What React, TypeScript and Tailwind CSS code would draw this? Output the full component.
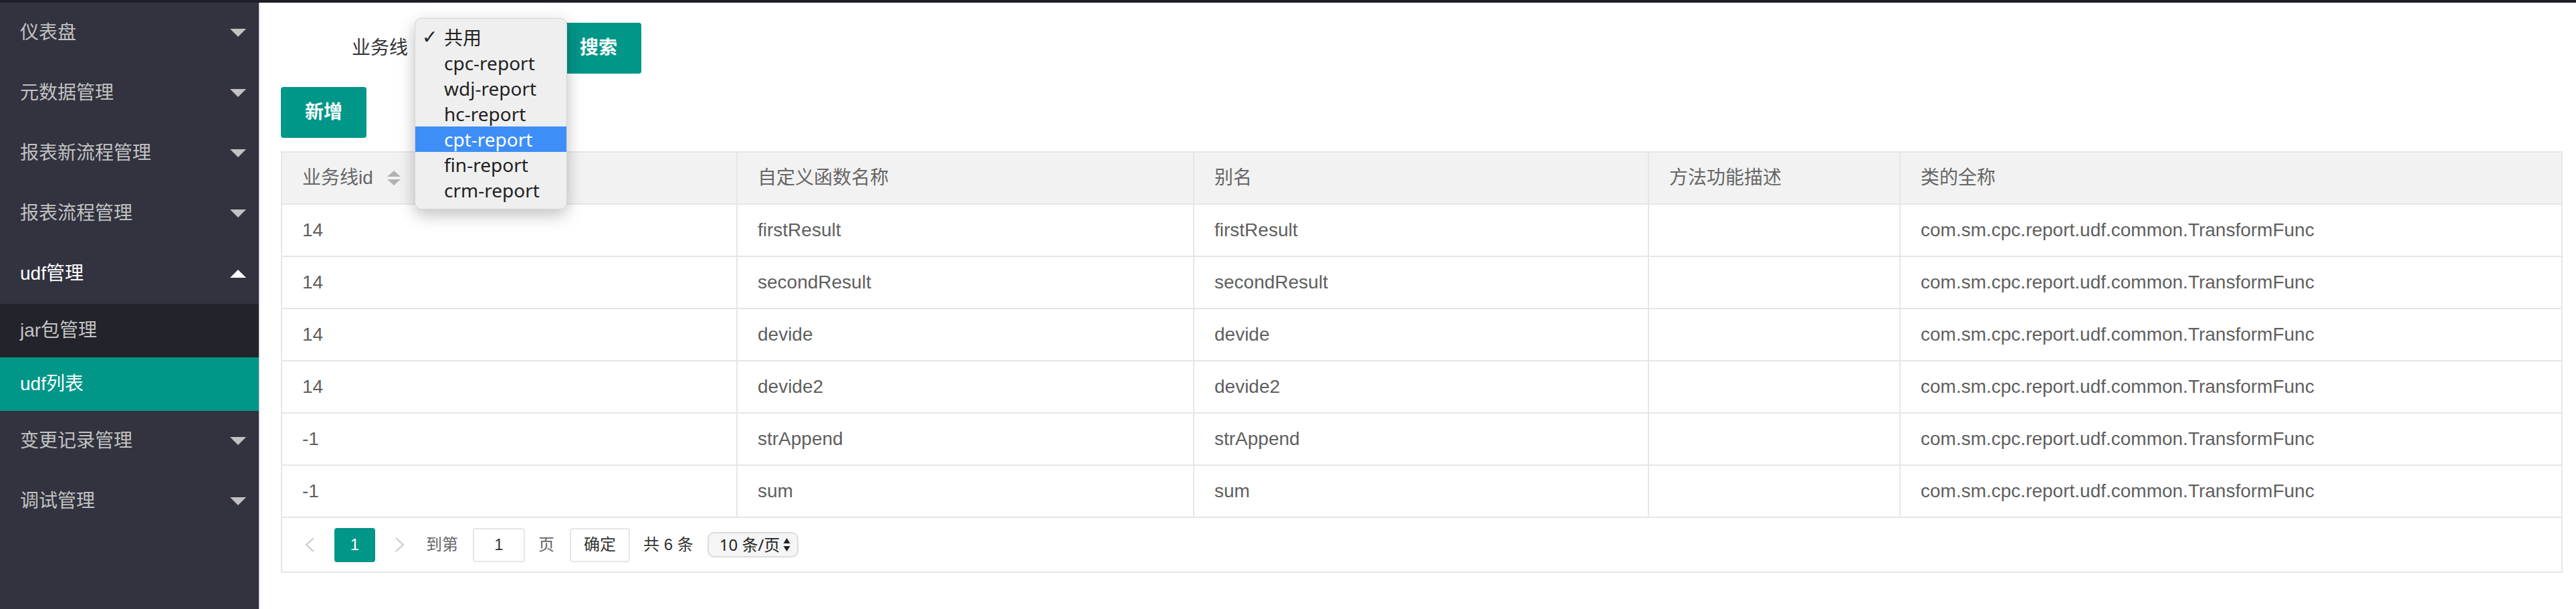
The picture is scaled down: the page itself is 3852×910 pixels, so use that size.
import React from "react";

const FONT = '"Liberation Sans", "Noto Sans CJK SC", sans-serif';
const MAC = '"Noto Sans", "Noto Sans CJK SC", sans-serif';

function Caret({ up, color }: { up?: boolean; color: string }) {
  return (
    <svg width="24" height="12" viewBox="0 0 24 12">
      <polygon points={up ? "0,12 24,12 12,0" : "0,0 24,0 12,12"} fill={color} />
    </svg>
  );
}

function MenuItem({ label, open }: { label: string; open?: boolean }) {
  return (
    <div className="h-[90px] flex items-center justify-between pl-[30px] pr-[19px]">
      <span className={open ? "text-[28px] text-white" : "text-[28px] text-[#c2c2c2]"}>{label}</span>
      <Caret up={open} color={open ? "#ffffff" : "#c2c2c2"} />
    </div>
  );
}

const rows: string[][] = [
  ["14", "firstResult", "firstResult", "", "com.sm.cpc.report.udf.common.TransformFunc"],
  ["14", "secondResult", "secondResult", "", "com.sm.cpc.report.udf.common.TransformFunc"],
  ["14", "devide", "devide", "", "com.sm.cpc.report.udf.common.TransformFunc"],
  ["14", "devide2", "devide2", "", "com.sm.cpc.report.udf.common.TransformFunc"],
  ["-1", "strAppend", "strAppend", "", "com.sm.cpc.report.udf.common.TransformFunc"],
  ["-1", "sum", "sum", "", "com.sm.cpc.report.udf.common.TransformFunc"],
];

const headers = ["业务线id", "自定义函数名称", "别名", "方法功能描述", "类的全称"];

const options = ["共用", "cpc-report", "wdj-report", "hc-report", "cpt-report", "fin-report", "crm-report"];

export default function App() {
  return (
    <div className="relative w-[3852px] h-[910px] bg-white flex flex-col overflow-hidden" style={{ fontFamily: FONT }}>
      <div className="h-[4px] bg-[#1e1f26] shrink-0" />
      <div className="flex flex-1">
        {/* Sidebar */}
        <div className="w-[389px] shrink-0 bg-[#32333f] border-r-2 border-[#e4e4e4] flex flex-col">
          <MenuItem label="仪表盘" />
          <MenuItem label="元数据管理" />
          <MenuItem label="报表新流程管理" />
          <MenuItem label="报表流程管理" />
          <MenuItem label="udf管理" open />
          <div className="bg-[#22232b]">
            <div className="h-[80px] flex items-center pl-[30px] text-[28px] text-[#c2c2c2]">jar包管理</div>
          </div>
          <div className="h-[80px] flex items-center pl-[30px] text-[28px] text-white bg-[#009688]">udf列表</div>
          <MenuItem label="变更记录管理" />
          <MenuItem label="调试管理" />
        </div>

        {/* Main */}
        <div className="flex-1 pl-[31px] pr-[20px] flex flex-col">
          <div className="mt-[30px] h-[76px] flex items-center">
            <div className="w-[220px] pr-[30px] text-right text-[28px] text-[#333]">业务线</div>
            <div className="w-[191px] h-[76px]" />
            <button className="w-[128px] h-[76px] bg-[#009688] rounded-[4px] text-white text-[28px] font-bold flex items-center justify-center">
              搜索
            </button>
          </div>

          <div className="mt-[20px]">
            <button className="w-[128px] h-[76px] bg-[#009688] rounded-[4px] text-white text-[28px] font-bold flex items-center justify-center">
              新增
            </button>
          </div>

          <div className="mt-[20px] border-2 border-[#e6e6e6]">
            <div className="grid grid-cols-[681px_683px_680px_376px_1fr]">
              {headers.map((h, i) => (
                <div
                  key={h}
                  className={
                    "h-[78px] bg-[#f2f2f2] border-b-2 border-[#e6e6e6] px-[30px] flex items-center text-[28px] text-[#666] " +
                    (i < 4 ? "border-r-2" : "")
                  }
                >
                  <span>{h}</span>
                  {i === 0 && (
                    <svg className="ml-[21px]" width="20" height="22" viewBox="0 0 20 22">
                      <polygon points="10,0 20,9 0,9" fill="#b2b2b2" />
                      <polygon points="0,13 20,13 10,22" fill="#b2b2b2" />
                    </svg>
                  )}
                </div>
              ))}
              {rows.map((r, ri) =>
                r.map((c, ci) => (
                  <div
                    key={ri + "-" + ci}
                    className={
                      "h-[78px] border-b-2 border-[#e6e6e6] px-[30px] flex items-center text-[28px] text-[#5f5f5f] whitespace-nowrap " +
                      (ci < 4 ? "border-r-2" : "")
                    }
                  >
                    {c}
                  </div>
                ))
              )}
            </div>
            {/* Pagination */}
            <div className="h-[80px] flex items-center pl-[33px] text-[24px]">
              <svg width="17" height="22" viewBox="0 0 17 22">
                <polyline points="14,1 3,11 14,21" fill="none" stroke="#c9c9c9" strokeWidth="2" />
              </svg>
              <div className="ml-[28px] w-[61px] h-[51px] bg-[#009688] rounded-[4px] text-white flex items-center justify-center">1</div>
              <svg className="ml-[28px]" width="17" height="22" viewBox="0 0 17 22">
                <polyline points="3,1 14,11 3,21" fill="none" stroke="#c9c9c9" strokeWidth="2" />
              </svg>
              <span className="ml-[31px] text-[#666]">到第</span>
              <div className="ml-[22px] w-[78px] h-[51px] border-2 border-[#e6e6e6] rounded-[4px] flex items-center justify-center text-[#333]">1</div>
              <span className="ml-[20px] text-[#666]">页</span>
              <div className="ml-[23px] w-[90px] h-[51px] border-2 border-[#e6e6e6] rounded-[4px] flex items-center justify-center text-[#333]">确定</div>
              <span className="ml-[20px] text-[#333]">共 6 条</span>
              <div
                className="ml-[21px] w-[136px] h-[38px] rounded-[10px] border-2 border-[#dcdcdc] bg-[#f5f5f5] flex items-center pl-[16px] pr-[10px] justify-between text-[#222] text-[24px]"
                style={{ fontFamily: MAC }}
              >
                <span>10 条/页</span>
                <svg width="11" height="22" viewBox="0 0 11 22">
                  <polygon points="5.5,1 10.5,9 0.5,9" fill="#222" />
                  <polygon points="0.5,13 10.5,13 5.5,21" fill="#222" />
                </svg>
              </div>
            </div>
          </div>
        </div>
      </div>

      {/* Native select popup */}
      <div
        className="absolute left-[620px] top-[27px] w-[228px] py-[9px] rounded-[10px] bg-[#efefef] border border-[#d4d4d4] shadow-[0_8px_24px_rgba(0,0,0,0.25)]"
        style={{ fontFamily: MAC }}
      >
        {options.map((o, i) => (
          <div
            key={o}
            className={
              "relative h-[38px] flex items-center pl-[43px] text-[28px] leading-none " +
              (i === 4 ? "bg-[#3d8ef7] text-white" : "text-[#222]")
            }
          >
            {i === 0 && (
              <span className="absolute left-[10px] text-[28px] font-bold" style={{ fontFamily: '"DejaVu Sans", sans-serif' }}>
                ✓
              </span>
            )}
            {o}
          </div>
        ))}
      </div>
    </div>
  );
}
